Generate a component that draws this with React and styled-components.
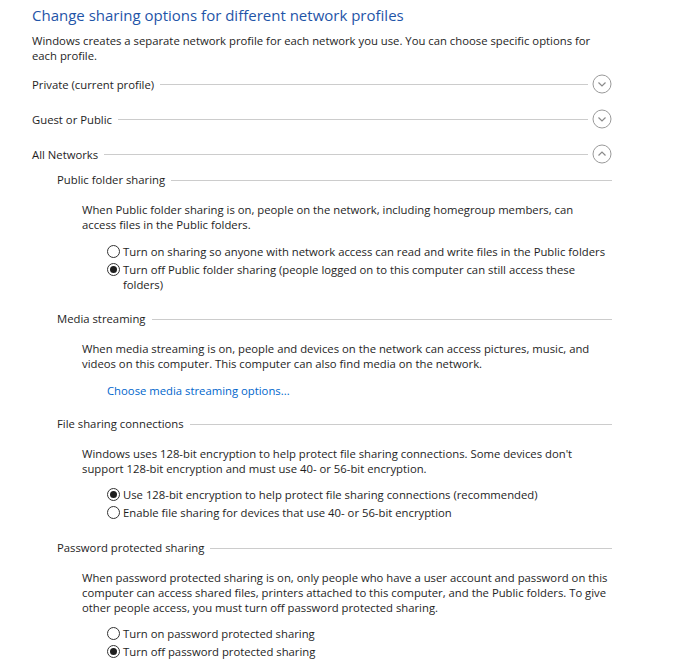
import React from 'react';
import styled, { createGlobalStyle } from 'styled-components';

const GlobalStyle = createGlobalStyle`
  body {
    margin: 0;
    background: #ffffff;
    font-family: "Open Sans", "Noto Sans", sans-serif;
    font-size: 11.3px;
    color: #1e1e1e;
  }
`;

const Page = styled.div`
  padding: 4px 0 0 32px;
  width: 580px;
`;

const Title = styled.h1`
  margin: 0;
  font-size: 15px;
  font-weight: 400;
  line-height: 22px;
  color: #1f55a8;
`;

const Text = styled.p`
  margin: ${({ $top }) => $top || 0}px 0 0;
  line-height: 15px;
  white-space: nowrap;
`;

const GroupRow = styled.div`
  display: flex;
  align-items: center;
  height: 20px;
  margin-top: ${({ $top }) => $top}px;
`;

const Rule = styled.div`
  flex: 1;
  height: 1px;
  background: #cccccc;
  margin: 1px 0 0 6px;
`;

const Toggle = styled.svg`
  width: 20px;
  height: 20px;
  margin-left: 4px;
  flex: none;
`;

const Section = styled.section`
  margin: ${({ $top }) => $top}px 0 0 25px;
`;

const SubHeader = styled.div`
  display: flex;
  align-items: center;
  line-height: 15px;
`;

const Body = styled.div`
  margin: 15px 0 0 25px;
  display: flex;
  flex-direction: column;
  gap: ${({ $gap }) => $gap || 11}px;
`;

const Options = styled.div`
  margin-left: 25px;
  display: flex;
  flex-direction: column;
  gap: 3px;
`;

const Option = styled.label`
  display: flex;
  align-items: flex-start;
  line-height: 15px;
`;

const Radio = styled.span`
  flex: none;
  box-sizing: border-box;
  width: 13px;
  height: 13px;
  margin: 1px 3px 0 0;
  border: 1px solid #333333;
  border-radius: 50%;
  display: flex;
  align-items: center;
  justify-content: center;

  &::after {
    content: '';
    width: 7px;
    height: 7px;
    border-radius: 50%;
    background: #1e1e1e;
    display: ${({ $on }) => ($on ? 'block' : 'none')};
  }
`;

const Link = styled.a`
  margin-left: 25px;
  line-height: 15px;
  color: #0066cc;
  text-decoration: none;
  cursor: pointer;
`;

const Chevron = ({ up }) => (
  <Toggle viewBox="0 0 20 20">
    <circle cx="10" cy="10" r="9" fill="none" stroke="#9a9a9a" strokeWidth="1" />
    <path
      d={up ? 'M6.5 11.5 L10 8 L13.5 11.5' : 'M6.5 8.5 L10 12 L13.5 8.5'}
      fill="none"
      stroke="#8a8a8a"
      strokeWidth="1.2"
    />
  </Toggle>
);

const Group = ({ label, up, top }) => (
  <GroupRow $top={top}>
    {label}
    <Rule />
    <Chevron up={up} />
  </GroupRow>
);

const Lines = ({ lines, top }) => (
  <Text $top={top}>
    {lines.map((l, i) => (
      <React.Fragment key={i}>
        {i > 0 && <br />}
        {l}
      </React.Fragment>
    ))}
  </Text>
);

const Choice = ({ on, lines }) => (
  <Option>
    <Radio $on={on} />
    <Lines lines={lines} />
  </Option>
);

const Setting = ({ title, top, gap, children }) => (
  <Section $top={top}>
    <SubHeader>
      {title}
      <Rule />
    </SubHeader>
    <Body $gap={gap}>{children}</Body>
  </Section>
);

export default function App() {
  return (
    <>
      <GlobalStyle />
      <Page>
        <Title>Change sharing options for different network profiles</Title>
        <Lines
          top={7}
          lines={[
            'Windows creates a separate network profile for each network you use. You can choose specific options for',
            'each profile.',
          ]}
        />
        <Group label="Private (current profile)" top={11} />
        <Group label="Guest or Public" top={15} />
        <Group label="All Networks" up top={15} />

        <Setting title="Public folder sharing" top={8} gap={12}>
          <Lines
            lines={[
              'When Public folder sharing is on, people on the network, including homegroup members, can',
              'access files in the Public folders.',
            ]}
          />
          <Options>
            <Choice lines={['Turn on sharing so anyone with network access can read and write files in the Public folders']} />
            <Choice
              on
              lines={[
                'Turn off Public folder sharing (people logged on to this computer can still access these',
                'folders)',
              ]}
            />
          </Options>
        </Setting>

        <Setting title="Media streaming" top={19} gap={12}>
          <Lines
            lines={[
              'When media streaming is on, people and devices on the network can access pictures, music, and',
              'videos on this computer. This computer can also find media on the network.',
            ]}
          />
          <Link>Choose media streaming options...</Link>
        </Setting>

        <Setting title="File sharing connections" top={18}>
          <Lines
            lines={[
              "Windows uses 128-bit encryption to help protect file sharing connections. Some devices don't",
              'support 128-bit encryption and must use 40- or 56-bit encryption.',
            ]}
          />
          <Options>
            <Choice on lines={['Use 128-bit encryption to help protect file sharing connections (recommended)']} />
            <Choice lines={['Enable file sharing for devices that use 40- or 56-bit encryption']} />
          </Options>
        </Setting>

        <Setting title="Password protected sharing" top={20}>
          <Lines
            lines={[
              'When password protected sharing is on, only people who have a user account and password on this',
              'computer can access shared files, printers attached to this computer, and the Public folders. To give',
              'other people access, you must turn off password protected sharing.',
            ]}
          />
          <Options>
            <Choice lines={['Turn on password protected sharing']} />
            <Choice on lines={['Turn off password protected sharing']} />
          </Options>
        </Setting>
      </Page>
    </>
  );
}
